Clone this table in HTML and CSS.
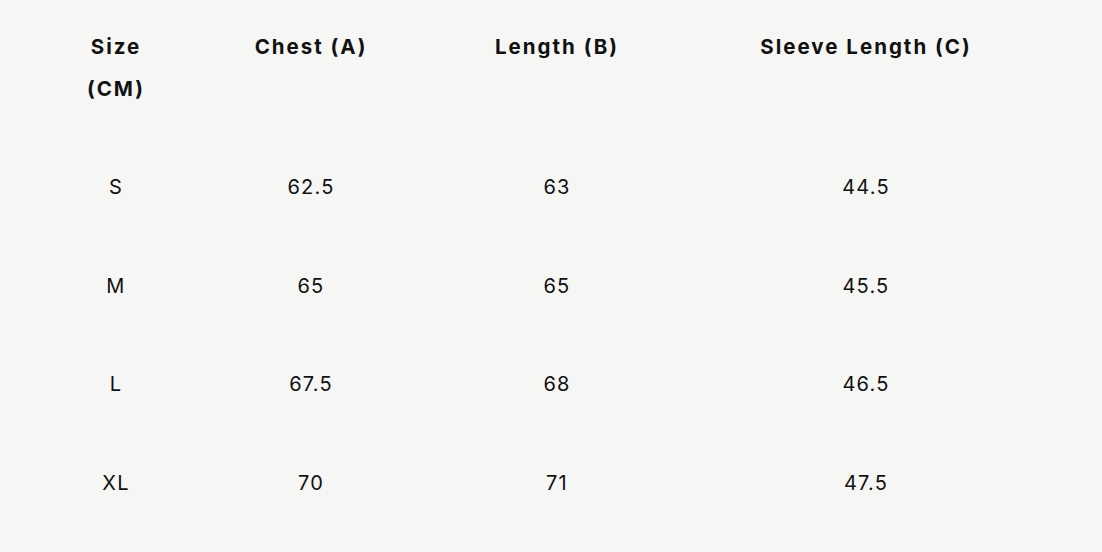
FILE: index.html
```html
<!DOCTYPE html>
<html>
<head>
<meta charset="utf-8">
<link rel="stylesheet" href="styles.css">
</head>
<body>
<table class="size-table">
  <colgroup>
    <col class="c1"><col class="c2"><col class="c3"><col class="c4">
  </colgroup>
  <thead>
    <tr>
      <th>Size<br>(CM)</th>
      <th>Chest (A)</th>
      <th>Length (B)</th>
      <th>Sleeve Length (C)</th>
    </tr>
  </thead>
  <tbody>
    <tr><td>S</td><td>62.5</td><td>63</td><td>44.5</td></tr>
    <tr><td>M</td><td>65</td><td>65</td><td>45.5</td></tr>
    <tr><td>L</td><td>67.5</td><td>68</td><td>46.5</td></tr>
    <tr><td>XL</td><td>70</td><td>71</td><td>47.5</td></tr>
  </tbody>
</table>
</body>
</html>
```
FILE: styles.css
```css
html, body {
  margin: 0;
  padding: 0;
  background: #f6f6f4;
}
body {
  font-family: Inter, "Liberation Sans", sans-serif;
  color: #111;
}
.size-table {
  margin: 1px 0 0 20px;
  border-collapse: collapse;
  table-layout: fixed;
  width: 1008px;
}
.c1 { width: 192px; }
.c2 { width: 198px; }
.c3 { width: 294px; }
.c4 { width: 324px; }
.size-table th {
  font-weight: 700;
  font-size: 20.5px;
  line-height: 42px;
  letter-spacing: 2px;
  padding: 25px 0 28px;
  vertical-align: top;
  text-align: center;
}
.size-table td {
  font-size: 20px;
  line-height: 42px;
  height: 98.5px;
  padding: 0;
  box-sizing: border-box;
  text-align: center;
  vertical-align: middle;
  letter-spacing: 1.2px;
}
```
